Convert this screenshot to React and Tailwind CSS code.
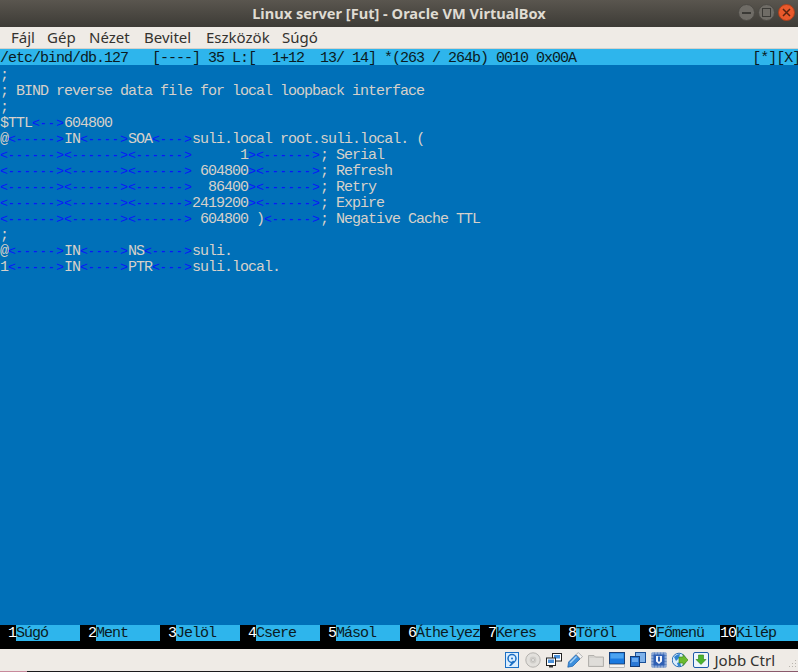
import React from 'react';

const rows = [
  ';',
  '; BIND reverse data file for local loopback interface',
  ';',
  '$TTL<-->604800',
  '@<----->IN<---->SOA<--->suli.local root.suli.local. (',
  '<------><------><------>      1><------>; Serial',
  '<------><------><------> 604800><------>; Refresh',
  '<------><------><------>  86400><------>; Retry',
  '<------><------><------>2419200><------>; Expire',
  '<------><------><------> 604800 )<----->; Negative Cache TTL',
  ';',
  '@<----->IN<---->NS<---->suli.',
  '1<----->IN<---->PTR<--->suli.local.',
];

const keys = [
  ['1', 'Súgó'],
  ['2', 'Ment'],
  ['3', 'Jelöl'],
  ['4', 'Csere'],
  ['5', 'Másol'],
  ['6', 'Áthelyez'],
  ['7', 'Keres'],
  ['8', 'Töröl'],
  ['9', 'Főmenü'],
  ['10', 'Kilép'],
];

const menu = [
  ['Fájl', 'w-[36px]'],
  ['Gép', 'w-[42px]'],
  ['Nézet', 'w-[55px]'],
  ['Bevitel', 'w-[62px]'],
  ['Eszközök', 'w-[76px]'],
  ['Súgó', 'w-[40px]'],
];

const status = '/etc/bind/db.127   [----] 35 L:[  1+12  13/ 14] *(263 / 264b) 0010 0x00A'.padEnd(94, ' ') + '[*][X';

// tab marker: chevrons at one size, dashes smaller so they stay separate
function TabMark({ text }) {
  return text.split(/(-+)/).map((p, i) =>
    i % 2 ? (
      <span key={i} className="text-[11px] leading-none tracking-[1.4px] font-bold align-[1px]">{p}</span>
    ) : (
      <span key={i} className="text-[13.33px] leading-none tracking-normal">{p}</span>
    )
  );
}

function EditorLine({ text }) {
  const parts = text.split(/(<-*>|>)/);
  return (
    <div className="h-4 whitespace-pre">
      {parts.map((p, i) => (
        i % 2
          ? <span key={i} className="text-[#0818f8] leading-none"><TabMark text={p} /></span>
          : <span key={i}>{p}</span>
      ))}
    </div>
  );
}

function WinButton({ children, className }) {
  return (
    <div className={`w-[17px] h-[17px] rounded-full flex items-center justify-center ${className}`}>
      {children}
    </div>
  );
}

function StatusIcons() {
  return (
    <div className="flex gap-[5px] items-center">
      {/* hard disk */}
      <svg width="16" height="16" viewBox="0 0 16 16">
        <rect x="1.5" y="0.5" width="13" height="15" fill="#dbeeff" stroke="#1c6fc4" />
        <circle cx="8" cy="6.5" r="4" fill="none" stroke="#1c6fc4" strokeWidth="1.5" />
        <circle cx="8" cy="6.5" r="1" fill="#1c6fc4" />
        <path d="M5 14 L9 8.5 L11 10 L7 14 Z" fill="#1c6fc4" />
      </svg>
      {/* optical disc */}
      <svg width="16" height="16" viewBox="0 0 16 16">
        <circle cx="8" cy="8" r="7.2" fill="#e2e0dc" stroke="#b5b3af" />
        <circle cx="8" cy="8" r="3.4" fill="#cfcdc9" />
        <circle cx="8" cy="8" r="1.4" fill="#f6f5f3" stroke="#a5a3a0" strokeWidth="0.6" />
      </svg>
      {/* shared network */}
      <svg width="16" height="16" viewBox="0 0 16 16">
        <rect x="6.5" y="1.5" width="9" height="7.5" fill="#fff" stroke="#222" />
        <rect x="8" y="3" width="6" height="3.5" fill="#4a90d9" />
        <rect x="0.5" y="6" width="9" height="7.5" fill="#fff" stroke="#222" />
        <rect x="2" y="7.5" width="6" height="3.5" fill="#4a90d9" />
        <rect x="3" y="14" width="4" height="1.5" fill="#333" />
      </svg>
      {/* usb pen */}
      <svg width="16" height="16" viewBox="0 0 16 16">
        <path d="M0.8 15.2 L1.6 10 L8.8 2.8 L13 7 L5.8 14.2 Z" fill="#3d8fdc" stroke="#1b5fa8" strokeWidth="0.7" />
        <path d="M2.6 10.4 L9 4 L10 5 L3.6 11.4 Z" fill="#a9d4f7" />
        <path d="M9.2 2.4 L11.4 0.6 L15.4 4.6 L13.4 6.8 Z" fill="#f2f2f2" stroke="#9a9a9a" strokeWidth="0.7" />
      </svg>
      {/* shared folder */}
      <svg width="16" height="16" viewBox="0 0 16 16">
        <path d="M0.5 3.5 H6 L7.5 5 H15.5 V14.5 H0.5 Z" fill="#d3d1cd" stroke="#b3b1ad" />
        <rect x="1.5" y="6" width="13" height="7.5" fill="#dfddd9" />
      </svg>
      {/* display */}
      <svg width="16" height="16" viewBox="0 0 16 16">
        <rect x="0.5" y="0.5" width="15" height="11.5" fill="#1a7ae0" stroke="#16407a" />
        <rect x="1.5" y="1.5" width="13" height="5" fill="#4ba3f0" />
        <rect x="0.5" y="12.5" width="15" height="3" fill="#f4f4f4" stroke="#9a9a9a" strokeWidth="0.6" />
      </svg>
      {/* video capture */}
      <svg width="16" height="16" viewBox="0 0 16 16">
        <rect x="5.5" y="0.5" width="10" height="10" fill="#7fb2ea" stroke="#1b4f96" />
        <rect x="0.5" y="4.5" width="9" height="10" fill="#2a78d6" stroke="#123a75" />
        <rect x="2" y="6" width="6" height="4" fill="#67a8ee" />
      </svg>
      {/* chip */}
      <svg width="16" height="16" viewBox="0 0 16 16">
        <rect x="0.5" y="0.5" width="15" height="15" fill="#2356a8" rx="1" />
        <path d="M2 0 V16 M5 0 V16 M8 0 V16 M11 0 V16 M14 0 V16 M0 2 H16 M0 5 H16 M0 8 H16 M0 11 H16 M0 14 H16" stroke="#c4d4ee" strokeWidth="0.8" />
        <rect x="2.5" y="2.5" width="11" height="11" fill="#2f5fb3" />
        <path d="M5 4 H11 V9.5 L8 12 L5 9.5 Z" fill="#f4f6fb" />
        <rect x="7" y="4.5" width="2" height="5" fill="#2f5fb3" />
      </svg>
      {/* globe with arrow */}
      <svg width="16" height="16" viewBox="0 0 16 16">
        <circle cx="7" cy="8" r="6.8" fill="#d9ecfb" stroke="#2a6fb5" />
        <path d="M2 5 C4 3 6 2 8 2 L7 6 L4 9 Z M5 11 L8 10 L9 14 L6 14 Z" fill="#2f83d1" />
        <path d="M7 5 H11 V2.5 L16 8 L11 13.5 V11 H7 Z" fill="#6cba2e" stroke="#3b7f14" strokeWidth="0.6" />
      </svg>
      {/* guest additions */}
      <svg width="16" height="16" viewBox="0 0 16 16">
        <rect x="0.5" y="0.5" width="15" height="15" rx="1.5" fill="#eef5fc" stroke="#1f5ba8" />
        <path d="M5.5 3 H10.5 V7.5 H13 L8 12.5 L3 7.5 H5.5 Z" fill="#4bb52e" stroke="#2b7d16" strokeWidth="0.6" />
      </svg>
    </div>
  );
}

export default function App() {
  return (
    <div className="w-[798px] h-[672px] overflow-hidden flex flex-col bg-[#efebe6]">
      {/* title bar */}
      <div className="h-[27px] shrink-0 relative flex items-center justify-center bg-gradient-to-b from-[#5a564f] to-[#3d3b36]">
        <span className="font-['Noto_Sans',sans-serif] font-bold text-[14.6px] text-[#dfdbd2]">Linux server [Fut] - Oracle VM VirtualBox</span>
        <div className="absolute right-[3px] top-[4px] flex gap-[3px]">
          <WinButton className="bg-[#6f6c66] border border-[#4b4944]">
            <div className="w-[9px] h-[2px] bg-[#3b3a36]" />
          </WinButton>
          <WinButton className="bg-[#6f6c66] border border-[#4b4944]">
            <div className="w-[9px] h-[9px] border-[1.5px] border-[#3b3a36]" />
          </WinButton>
          <WinButton className="bg-[#e9592b] border border-[#a93f1c]">
            <svg width="9" height="9" viewBox="0 0 9 9"><path d="M1 1 L8 8 M8 1 L1 8" stroke="#5a2410" strokeWidth="1.5" /></svg>
          </WinButton>
        </div>
      </div>

      {/* menu bar */}
      <div className="h-[22px] shrink-0 flex items-center pl-[11px] border-b border-[#d5d1cb] font-['Noto_Sans',sans-serif] text-[15px] text-[#33322f]">
        {menu.map(([label, w]) => (
          <span key={label} className={`${w} whitespace-nowrap`}>{label}</span>
        ))}
      </div>

      {/* mcedit */}
      <div className="w-[800px] flex-1 flex flex-col font-['Liberation_Mono',monospace] text-[15px] tracking-[-1px] leading-4">
        <div className="h-4 shrink-0 pt-[2px] bg-[#2eb5ec] text-[#0a1a22] whitespace-pre">
          {status}<span className="tracking-[-3px]">]</span>
        </div>
        <div className="flex-1 pt-[3px] bg-[#0070b8] text-[#d6d0ca]">
          {rows.map((r, i) => (
            <EditorLine key={i} text={r} />
          ))}
        </div>
        <div className="h-4 shrink-0 pt-px grid grid-cols-10 bg-black">
          {keys.map(([n, label]) => (
            <div key={n} className="flex -mt-px pt-px bg-[#2eb5ec]">
              <span className="w-4 -mt-px pt-px bg-black text-white text-right whitespace-pre">{n}</span>
              <span className="text-[#0a1a22] whitespace-pre">{label}</span>
            </div>
          ))}
        </div>
        <div className="h-2 shrink-0 bg-black" />
      </div>

      {/* virtualbox status bar */}
      <div className="h-[22px] shrink-0 relative flex items-center justify-end pr-[23px] gap-[6px]">
        <StatusIcons />
        <span className="font-['Noto_Sans',sans-serif] text-[15px] text-[#33322f]">Jobb Ctrl</span>
        {/* resize grip */}
        <svg className="absolute right-[1px] bottom-[1px]" width="11" height="11" viewBox="0 0 11 11">
          <path d="M9 1h1v1H9z M6 4h1v1H6z M9 4h1v1H9z M3 7h1v1H3z M6 7h1v1H6z M9 7h1v1H9z" fill="#b9b5ae" />
        </svg>
      </div>
      <div className="h-px shrink-0 flex">
        <div className="w-[27px] bg-[#c88a9c]" />
        <div className="flex-1 bg-[#1b1a1c]" />
        <div className="w-[78px] bg-[#8a5a6c]" />
      </div>
    </div>
  );
}
